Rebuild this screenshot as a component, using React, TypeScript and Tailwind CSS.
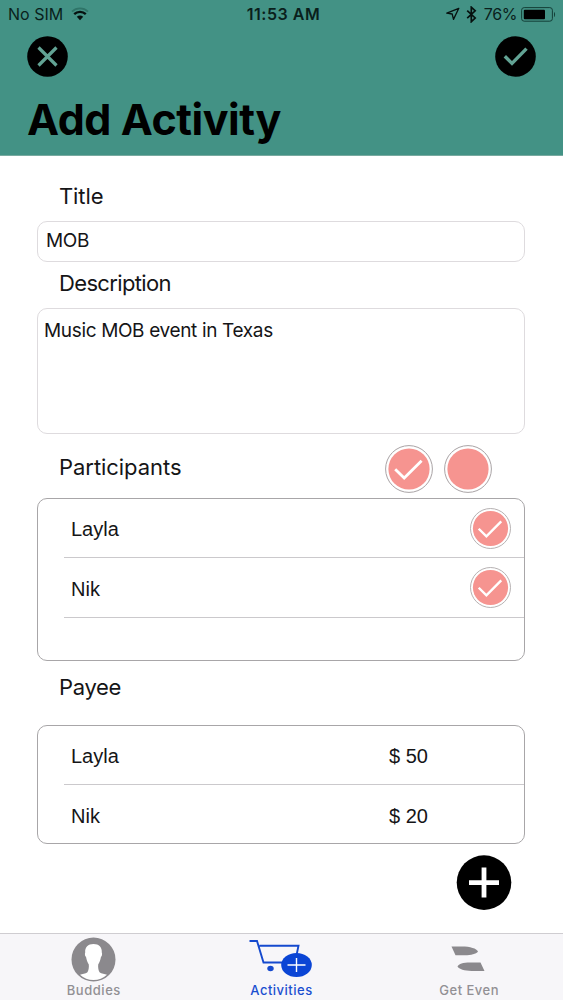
import type { ReactNode } from "react";

const participants = ["Layla", "Nik"];

const payees = [
  { name: "Layla", amount: "$ 50" },
  { name: "Nik", amount: "$ 20" },
];

function StatusBar() {
  return (
    <div className="flex h-[29px] items-center justify-between pl-[8px] pr-[7px] text-[16px] text-[#0a1f1c]">
      <div className="flex w-[150px] items-center gap-[8px] pb-px">
        <span className="whitespace-nowrap">No SIM</span>
        <svg width="18" height="14" viewBox="0 0 18 14" fill="none">
          <path d="M1 4.6C5.5 .3 12.5 .3 17 4.6" stroke="#2f7468" strokeWidth="1.8" />
          <path d="M3.2 7.2C6.4 4.1 11.6 4.1 14.8 7.2" stroke="#06110f" strokeWidth="2.3" />
          <path d="M5.8 9.8C7.6 8 10.4 8 12.2 9.8L9 13.2z" fill="#06110f" />
        </svg>
      </div>
      <span className="pb-px pl-[3px] font-semibold tracking-[0.55px] whitespace-nowrap">11:53 AM</span>
      <div className="flex w-[150px] items-center justify-end pb-px">
        <svg width="14" height="14" viewBox="0 0 14 14" fill="none" className="mr-[6px]">
          <path d="M12.8 1.3L.8 6.2l5.4.8 1.3 5.4z" stroke="#06110f" strokeWidth="1.3" strokeLinejoin="round" />
        </svg>
        <svg width="11" height="17" viewBox="0 0 11 17" fill="none" className="mr-[7px]">
          <path d="M1.2 4.6l8 7.4-3.9 3.7V1.2l3.9 3.6-8 7.4" stroke="#06110f" strokeWidth="1.7" />
        </svg>
        <span className="mr-[4px] tracking-[-0.4px]">76%</span>
        <svg width="35" height="15" viewBox="0 0 35 15" fill="none">
          <rect x=".6" y=".6" width="30.8" height="13.6" rx="2.6" stroke="#143f38" strokeWidth="1" />
          <rect x="2.8" y="2.8" width="21.2" height="9.4" rx="1" fill="#000" />
          <path d="M33 5v5c1.4-.6 1.4-4.4 0-5z" fill="#143f38" />
        </svg>
      </div>
    </div>
  );
}

function CheckCircle({ size, checked = true }: { size: number; checked?: boolean }) {
  return (
    <svg width={size} height={size} viewBox="0 0 48 48" fill="none">
      <circle cx="24" cy="24" r="23.4" fill="#fff" stroke="#a9a3a5" strokeWidth="1" />
      <circle cx="24" cy="24" r="20.6" fill="#f69490" />
      {checked && <path d="M10.2 24.3l9 8.8 17.4-17.4" stroke="#fff" strokeWidth="2.8" />}
    </svg>
  );
}

function Label({ children }: { children: ReactNode }) {
  return <span className="pl-[59px] text-[22px] leading-[30px] text-[#151517]">{children}</span>;
}

export default function App() {
  return (
    <div className="flex h-[1000px] w-[563px] flex-col overflow-hidden bg-white font-['Inter',sans-serif]">
      <header className="h-[156px] border-b border-[#78aaa0] bg-[#439285]">
        <StatusBar />
        <div className="flex justify-between px-[27px] pt-[7px]">
          <svg width="41" height="41" viewBox="0 0 41 41" fill="none">
            <circle cx="20.5" cy="20.5" r="20.3" fill="#000" />
            <path d="M11.5 11.5l18 18M29.5 11.5l-18 18" stroke="#62a394" strokeWidth="3.2" />
          </svg>
          <svg width="41" height="41" viewBox="0 0 41 41" fill="none">
            <circle cx="20.5" cy="20.5" r="20.3" fill="#000" />
            <path d="M9.8 20.2l7.2 7.2L31.5 12.6" stroke="#62a394" strokeWidth="3.4" />
          </svg>
        </div>
        <h1 className="pl-[27px] pt-[15px] text-[43px] font-bold leading-[54px] tracking-[-0.45px] text-black">
          Add Activity
        </h1>
      </header>

      <main className="flex h-[777px] flex-col">
        <div className="flex h-[65px] items-center pt-[14px] tracking-[-0.1px]">
          <Label>Title</Label>
        </div>
        <div className="ml-[37px] mr-[38px] flex h-[41px] items-center rounded-[10px] border border-[#dedbde] pl-[8px] text-[19px] text-[#151517]">
          <span className="tracking-[-0.4px]">MOB</span>
        </div>
        <div className="flex h-[46px] items-center pb-[5px] tracking-[-0.65px]">
          <Label>Description</Label>
        </div>
        <div className="ml-[37px] mr-[38px] h-[126px] rounded-[10px] border border-[#dedbde] pl-[6px] pt-[8px] text-[19px] leading-[28px] tracking-[-0.35px] text-[#151517]">
          Music MOB event in Texas
        </div>

        <div className="flex h-[64px] items-center justify-between pr-[71px]">
          <div className="pt-[2px] tracking-[-0.05px]">
            <Label>Participants</Label>
          </div>
          <div className="flex gap-[11px] pt-[5px]">
            <CheckCircle size={48} />
            <CheckCircle size={48} checked={false} />
          </div>
        </div>
        <div className="ml-[37px] mr-[38px] h-[163px] rounded-[10px] border-[1.5px] border-[#a8a6a8] pl-[26px] font-['Liberation_Sans',sans-serif] text-[20px] text-[#151517]">
          {participants.map((name) => (
            <div
              key={name}
              className="flex h-[60px] items-center justify-between border-b border-[#cbc9cc] pl-[7px] pr-[13px] first:h-[59px]"
            >
              <span className="pt-[2px]">{name}</span>
              <CheckCircle size={41} />
            </div>
          ))}
        </div>

        <div className="flex h-[64px] items-start pt-[11px] tracking-[-0.35px]">
          <Label>Payee</Label>
        </div>
        <div className="ml-[37px] mr-[38px] h-[119px] rounded-[10px] border-[1.5px] border-[#a8a6a8] pl-[26px] font-['Liberation_Sans',sans-serif] text-[20px] text-[#151517]">
          {payees.map((payee) => (
            <div key={payee.name} className="flex h-[59px] items-center border-[#cbc9cc] pl-[7px] pt-[2px] first:border-b">
              <span className="w-[318px]">{payee.name}</span>
              <span>{payee.amount}</span>
            </div>
          ))}
        </div>
        <div className="flex justify-end pr-[51px] pt-[11px]">
          <svg width="56" height="56" viewBox="0 0 56 56" fill="none">
            <circle cx="28" cy="27.600" r="27.300" fill="#000" />
            <path d="M28 12.600v30M13 27.600h30" stroke="#fff" strokeWidth="4.800" />
          </svg>
        </div>
      </main>

      <nav className="grid h-[67px] grid-cols-3 border-t border-[#cfcdd1] bg-[#f7f6f9] text-[13px] font-medium text-[#929094]">
        <div className="flex flex-col items-center pt-[3px]">
          <svg width="45" height="45" viewBox="0 0 45 45">
            <circle cx="22.5" cy="22.500" r="22" fill="#8b898d" />
            <path
              d="M22.500 7c-5.500 0-8.700 3.400-8.300 8.400-.6 1.200-.2 3.800.8 4.400.6 3.400 1.400 5.400 2.800 7.700.3 3.200-.2 6.400-1.600 8-1.600 1.200-5 1.500-7.200 2.300 3.800 3.500 8.300 5.200 13.500 5.200s9.700-1.700 13.500-5.200c-2.200-.8-5.600-1.100-7.200-2.300-1.400-1.600-1.900-4.800-1.600-8 1.400-2.300 2.200-4.300 2.800-7.700 1-.6 1.400-3.200.8-4.400C31.200 10.400 28 7 22.500 7z"
              fill="#fff"
            />
          </svg>
          <span className="-mt-px pt-px leading-[17px] tracking-[0.55px]">Buddies</span>
        </div>
        <div className="flex flex-col items-center pt-[3px] text-[#1b4fd0]">
          <svg width="64" height="45" viewBox="0 0 64 45" fill="none">
            <path d="M.5 4h7.500l6.500 21.500h20M10.500 8.700h39l-2.500 12" stroke="#1549ce" strokeWidth="1.900" />
            <ellipse cx="21.500" cy="31.500" rx="3.200" ry="2.700" fill="#1549ce" />
            <ellipse cx="47.500" cy="28" rx="15.300" ry="12" fill="#0b45d5" />
            <path d="M47.500 21v14M38.500 28h18" stroke="#fff" strokeWidth="1.400" />
          </svg>
          <span className="-mt-px pt-px leading-[17px] tracking-[0.5px]">Activities</span>
        </div>
        <div className="flex flex-col items-center pt-[3px]">
          <svg width="45" height="45" viewBox="0 0 45 45" fill="#8b898d">
            <path d="M4.500 9.500h10c9 0 15 2 16.500 5-2 2.500-7 3.700-13 3.700H8.500z" />
            <path d="M33.500 25.500h-10c-8 0-11.500 1.400-13 4 1.500 2.800 7 4.400 14 4.400h13z" />
          </svg>
          <span className="-mt-px pt-px leading-[17px] tracking-[0.5px]">Get Even</span>
        </div>
      </nav>
    </div>
  );
}
